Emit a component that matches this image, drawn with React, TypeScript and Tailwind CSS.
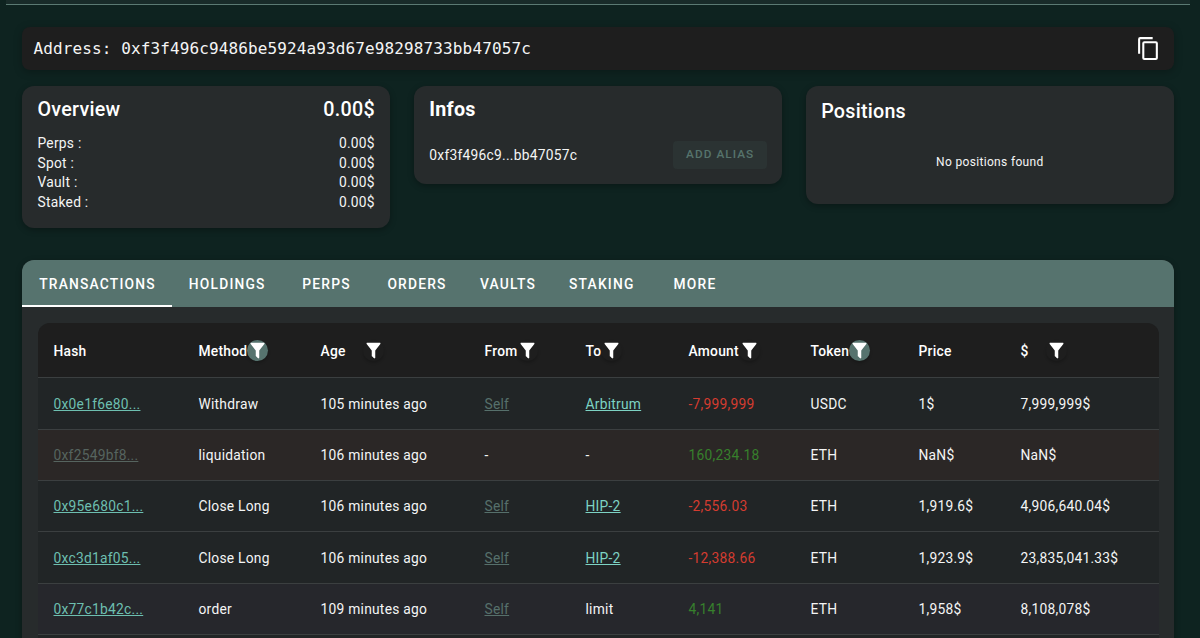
import clsx from 'clsx';
import type { ReactNode } from 'react';

type FilterState = 'idle' | 'active';

interface Column {
  label: string;
  filter?: FilterState;
  filterOffset?: string;
}

interface Transaction {
  hash: string;
  method: string;
  age: string;
  from: string;
  to: string;
  amount: string;
  token: string;
  price: string;
  total: string;
}

const BALANCES = [
  { label: 'Perps :', value: '0.00$' },
  { label: 'Spot :', value: '0.00$' },
  { label: 'Vault :', value: '0.00$' },
  { label: 'Staked :', value: '0.00$' },
];

const TABS = [
  { label: 'TRANSACTIONS', width: 'w-[150px]' },
  { label: 'HOLDINGS', width: 'w-[109.5px]' },
  { label: 'PERPS', width: 'w-[89px]' },
  { label: 'ORDERS', width: 'w-[92px]' },
  { label: 'VAULTS', width: 'w-[90px]' },
  { label: 'STAKING', width: 'w-[97.5px]' },
  { label: 'MORE', width: 'w-[89px]' },
];

const COLUMNS: Column[] = [
  { label: 'Hash' },
  { label: 'Method', filter: 'active' },
  { label: 'Age', filter: 'idle', filterOffset: 'ml-[17px]' },
  { label: 'From', filter: 'idle' },
  { label: 'To', filter: 'idle' },
  { label: 'Amount', filter: 'idle' },
  { label: 'Token', filter: 'active' },
  { label: 'Price' },
  { label: '$', filter: 'idle', filterOffset: 'ml-[17px]' },
];

const TRANSACTIONS: Transaction[] = [
  { hash: '0x0e1f6e80...', method: 'Withdraw', age: '105 minutes ago', from: 'Self', to: 'Arbitrum', amount: '-7,999,999', token: 'USDC', price: '1$', total: '7,999,999$' },
  { hash: '0xf2549bf8...', method: 'liquidation', age: '106 minutes ago', from: '-', to: '-', amount: '160,234.18', token: 'ETH', price: 'NaN$', total: 'NaN$' },
  { hash: '0x95e680c1...', method: 'Close Long', age: '106 minutes ago', from: 'Self', to: 'HIP-2', amount: '-2,556.03', token: 'ETH', price: '1,919.6$', total: '4,906,640.04$' },
  { hash: '0xc3d1af05...', method: 'Close Long', age: '106 minutes ago', from: 'Self', to: 'HIP-2', amount: '-12,388.66', token: 'ETH', price: '1,923.9$', total: '23,835,041.33$' },
  { hash: '0x77c1b42c...', method: 'order', age: '109 minutes ago', from: 'Self', to: 'limit', amount: '4,141', token: 'ETH', price: '1,958$', total: '8,108,078$' },
];

const GRID = 'grid grid-cols-[145px_122px_164px_101px_103px_122px_108px_102px_1fr] items-center pl-4';

function CopyIcon() {
  return (
    <svg viewBox="0 0 24 24" className="size-[25px] fill-current">
      <path d="M19,21H8V7H19M19,5H8A2,2 0 0,0 6,7V21A2,2 0 0,0 8,23H19A2,2 0 0,0 21,21V7A2,2 0 0,0 19,5M16,1H4A2,2 0 0,0 2,3V17H4V3H16V1Z" />
    </svg>
  );
}

function FilterButton({ state, offset }: { state: FilterState; offset?: string }) {
  return (
    <button
      className={clsx(
        'flex size-[21px] shrink-0 items-center justify-center rounded-full text-white shadow-[0_2px_3px_rgba(0,0,0,0.2)]',
        state === 'active' && 'bg-[#56736e]',
        offset,
      )}
    >
      <svg viewBox="0 0 24 24" className="size-[21px] fill-current">
        <path d="M14,12V19.88C14.04,20.18 13.94,20.5 13.71,20.71C13.32,21.1 12.69,21.1 12.3,20.71L10.29,18.7C10.06,18.47 9.96,18.16 10,17.87V12H9.97L4.21,4.62C3.87,4.19 3.95,3.56 4.38,3.22C4.57,3.08 4.78,3 5,3H19C19.22,3 19.43,3.08 19.62,3.22C20.05,3.56 20.13,4.19 19.79,4.62L14.03,12H14Z" />
      </svg>
    </button>
  );
}

function Card({ className, children }: { className?: string; children: ReactNode }) {
  return (
    <section className={clsx('rounded-[12px] bg-[#272b2c] px-[15.5px] shadow-[0_2px_6px_rgba(0,0,0,0.3)]', className)}>
      {children}
    </section>
  );
}

function TransactionRow({ tx }: { tx: Transaction }) {
  const isLiquidation = tx.method === 'liquidation';
  const isOrder = tx.method === 'order';
  const hasTargetLink = tx.to === 'Arbitrum' || tx.to === 'HIP-2';

  return (
    <div
      className={clsx(
        GRID,
        'h-[51.4px] border-b border-[#3b3f40] pt-px',
        isLiquidation && 'bg-[#2b2726]',
        isOrder && 'bg-[#26272c]',
        !isLiquidation && !isOrder && 'bg-[#212526]',
      )}
    >
      <div>
        <a className={clsx('underline', isLiquidation ? 'text-[#56645f]' : 'text-[#6dbfb0]')}>{tx.hash}</a>
      </div>
      <div>{tx.method}</div>
      <div>{tx.age}</div>
      <div>{tx.from === '-' ? '-' : <a className="text-[#56706b] underline">{tx.from}</a>}</div>
      <div>{hasTargetLink ? <a className="text-[#7dd3c4] underline">{tx.to}</a> : tx.to}</div>
      <div className={tx.amount.startsWith('-') ? 'text-[#d43c30]' : 'text-[#37802c]'}>{tx.amount}</div>
      <div>{tx.token}</div>
      <div>{tx.price}</div>
      <div>{tx.total}</div>
    </div>
  );
}

export default function App() {
  return (
    <div className="h-[638px] overflow-hidden bg-[#0e2320] font-[Roboto,sans-serif] text-[13.8px] tracking-[0.25px] text-[#f4f5f5]">
      <div className="mr-[10px] ml-[6px] h-[5px] border-b border-[#5b7a73] bg-[#182b29]" />

      <main className="mr-[26px] ml-[22px] pt-[21.5px]">
        <div className="flex h-[43px] items-center justify-between rounded-[8px] bg-[#1e1e1e] pr-[13px] pl-[11.5px] shadow-[0_2px_8px_rgba(0,0,0,0.25)]">
          <span className="pt-px font-['DejaVu_Sans_Mono',monospace] text-[16px] tracking-[0.12px]">
            Address: 0xf3f496c9486be5924a93d67e98298733bb47057c
          </span>
          <button className="text-white">
            <CopyIcon />
          </button>
        </div>

        <div className="mt-4 grid grid-cols-3 items-start gap-[23.5px]">
          <Card className="h-[142px] pt-[9.5px]">
            <div className="flex items-center justify-between text-[19.7px] leading-[30px] font-medium text-white">
              <h2>Overview</h2>
              <span>0.00$</span>
            </div>
            <dl className="mt-[9px]">
              {BALANCES.map((item) => (
                <div key={item.label} className="flex justify-between leading-[19.7px]">
                  <dt>{item.label}</dt>
                  <dd>{item.value}</dd>
                </div>
              ))}
            </dl>
          </Card>

          <Card className="h-[98.5px] pt-[9.5px]">
            <h2 className="text-[19.7px] leading-[30px] font-bold text-white">Infos</h2>
            <div className="mt-[15.5px] flex items-center justify-between">
              <span className="pt-px">0xf3f496c9...bb47057c</span>
              <button className="h-[28px] w-[94px] rounded-[4px] bg-[#2b3333] pt-px pl-px text-[11.8px] font-medium tracking-[1.05px] text-[#56736c]">
                ADD ALIAS
              </button>
            </div>
          </Card>

          <Card className="h-[118.5px] pt-[11.5px]">
            <h2 className="text-[19.7px] leading-[30px] font-medium text-white">Positions</h2>
            <p className="mt-[25px] text-center text-[12px] leading-5 tracking-[0.33px]">No positions found</p>
          </Card>
        </div>

        <section className="mt-8 overflow-hidden rounded-t-[12px] bg-[#272b2c] shadow-[0_2px_6px_rgba(0,0,0,0.3)]">
          <nav className="flex h-[47px] bg-[#56736e]">
            {TABS.map((tab, i) => (
              <button
                key={tab.label}
                className={clsx(
                  tab.width,
                  'border-b-2 pt-1 pl-px text-center font-medium tracking-[1.2px] text-white',
                  i === 0 ? 'border-white' : 'border-transparent',
                )}
              >
                {tab.label}
              </button>
            ))}
          </nav>

          <div className="mx-[15.5px] mt-4 h-[340px] overflow-hidden rounded-t-[12px] bg-[#212526]">
            <div className={clsx(GRID, 'h-[55.7px] border-b border-[#3b3f40] bg-[#1e1e1e] pt-[2px] font-medium text-white')}>
              {COLUMNS.map((col) => (
                <div key={col.label} className="flex items-center">
                  {col.label}
                  {col.filter && <FilterButton state={col.filter} offset={col.filterOffset} />}
                </div>
              ))}
            </div>
            {TRANSACTIONS.map((tx) => (
              <TransactionRow key={tx.hash} tx={tx} />
            ))}
          </div>
        </section>
      </main>
    </div>
  );
}
